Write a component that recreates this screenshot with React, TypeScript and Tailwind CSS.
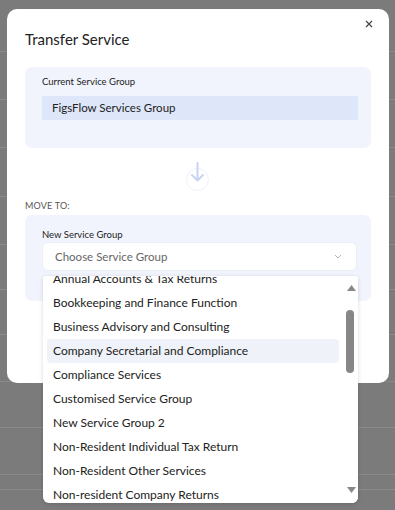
import React from "react";

const items = [
  "Annual Accounts & Tax Returns",
  "Bookkeeping and Finance Function",
  "Business Advisory and Consulting",
  "Company Secretarial and Compliance",
  "Compliance Services",
  "Customised Service Group",
  "New Service Group 2",
  "Non-Resident Individual Tax Return",
  "Non-Resident Other Services",
  "Non-resident Company Returns",
];

const rowHeights = [52, 48, 48, 49, 48, 45, 45, 47, 46, 47, 15];

export default function App() {
  return (
    <div
      className="relative w-[395px] h-[510px] overflow-hidden bg-[#7b7b7b]"
      style={{ fontFamily: "Lato, 'Noto Sans', sans-serif" }}
    >
      {/* background table rows */}
      <div className="flex flex-col">
        {rowHeights.map((h, i) => (
          <div key={i} className="border-b border-[#8a8a8a]" style={{ height: h }} />
        ))}
      </div>

      {/* modal */}
      <div className="absolute left-[7px] top-[9px] w-[382px] h-[374px] bg-white rounded-[10px] px-[18px] pt-[20px]">
        <button className="absolute right-[14px] top-[9px] w-[12px] h-[12px] flex items-center justify-center text-[#444]">
          <svg width="8" height="8" viewBox="0 0 8 8">
            <path d="M1 1L7 7M7 1L1 7" stroke="#444" strokeWidth="1.2" />
          </svg>
        </button>
        <h2 className="text-[15px] leading-[20px] text-[#222] font-normal">Transfer Service</h2>

        <div className="mt-[18px] h-[81px] rounded-[7px] bg-[#f1f4fd] pl-[17px] pr-[13px] pt-[8px]">
          <div className="text-[9.5px] leading-[14px] text-[#222]">Current Service Group</div>
          <div className="mt-[7px] h-[24px] bg-[#dee6f9] flex items-center px-[10px] text-[11.5px] text-[#222]">
            FigsFlow Services Group
          </div>
        </div>

        <div className="flex justify-center mt-[12px]">
          <div className="relative w-[24px] h-[30px]">
            <div className="absolute left-0 top-[8px] w-[23px] h-[23px] rounded-full border border-[#eef1fb]" />
            <svg className="absolute left-0 top-0" width="24" height="30" viewBox="0 0 24 30">
              <path d="M11.5 3V20M6 15L11.5 20.5L17 15" stroke="#c9d4f3" strokeWidth="2" fill="none" strokeLinecap="round" strokeLinejoin="round" />
            </svg>
          </div>
        </div>

        <div className="mt-[10px] text-[9px] leading-[12px] text-[#555] tracking-[0.2px]">MOVE TO:</div>

        <div className="mt-[3px] h-[86px] rounded-[7px] bg-[#f1f4fd] pl-[17px] pr-[14px] pt-[13px]">
          <div className="text-[9.5px] leading-[14px] text-[#222]">New Service Group</div>
          <div className="mt-[0px] h-[29px] bg-white rounded-[6px] border border-[#eceff6] flex items-center justify-between pl-[12px] pr-[14px] text-[11.5px] text-[#666]">
            <span>Choose Service Group</span>
            <svg width="8" height="5" viewBox="0 0 8 5">
              <path d="M1 1L4 4L7 1" stroke="#aaa" strokeWidth="0.9" fill="none" />
            </svg>
          </div>
        </div>

        <div className="mt-[22px] flex justify-end gap-[10px] pr-[13px]">
          <div className="w-[90px] h-[24px] rounded-[6px] border border-[#e5e7eb]" />
          <div className="w-[90px] h-[24px] rounded-[6px] bg-[#1aa39a]" />
        </div>
      </div>

      {/* dropdown */}
      <div className="absolute left-[43px] top-[276px] w-[315px] h-[227px] bg-white rounded-b-[6px] rounded-t-[3px] shadow-[0_1px_4px_rgba(0,0,0,0.15)] overflow-hidden">
        <div className="mt-[-9px] pl-[4px] pr-[19px]">
          {items.map((t, i) => (
            <div
              key={t}
              className={`h-[24px] flex items-center pl-[6px] text-[12px] text-[#222] rounded-[4px] ${i === 3 ? "bg-[#eff2f8]" : ""}`}
            >
              {t}
            </div>
          ))}
        </div>
        {/* scrollbar */}
        <div className="absolute right-0 top-0 w-[14px] h-full bg-white">
          <svg className="absolute left-[3px] top-[9px]" width="9" height="6" viewBox="0 0 9 6">
            <path d="M4.5 0L9 6H0Z" fill="#888" />
          </svg>
          <div className="absolute left-[2px] top-[34px] w-[8px] h-[63px] rounded-full bg-[#878787]" />
          <svg className="absolute left-[3px] bottom-[10px]" width="9" height="6" viewBox="0 0 9 6">
            <path d="M0 0H9L4.5 6Z" fill="#888" />
          </svg>
        </div>
      </div>
    </div>
  );
}
